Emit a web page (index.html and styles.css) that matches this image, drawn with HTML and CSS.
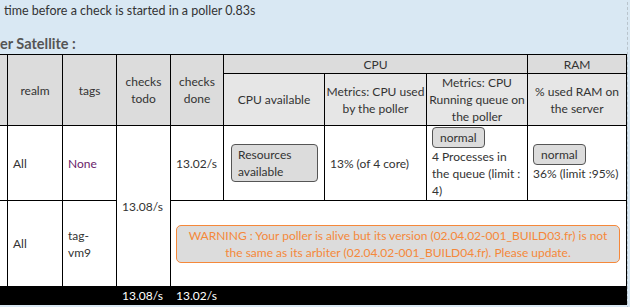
FILE: index.html
```html
<!DOCTYPE html>
<html>
<head>
<meta charset="utf-8">
<link rel="stylesheet" href="styles.css">
</head>
<body>
<div class="page">
  <p class="latency">time before a check is started in a poller 0.83s</p>
  <h3 class="title">er Satellite :</h3>
  <table class="sat">
    <colgroup>
      <col class="c0"><col class="c-realm"><col class="c-tags"><col class="c-todo"><col class="c-done">
      <col class="c-avail"><col class="c-used"><col class="c-queue"><col class="c-ram">
    </colgroup>
    <thead>
      <tr class="h1">
        <th rowspan="2"></th>
        <th rowspan="2">realm</th>
        <th rowspan="2">tags</th>
        <th rowspan="2">checks todo</th>
        <th rowspan="2">checks done</th>
        <th colspan="3">CPU</th>
        <th>RAM</th>
      </tr>
      <tr class="h2">
        <th class="sub">CPU available</th>
        <th class="sub">Metrics: CPU used by the poller</th>
        <th class="sub">Metrics: CPU Running queue on the poller</th>
        <th class="sub">% used RAM on the server</th>
      </tr>
    </thead>
    <tbody>
      <tr class="r1">
        <td></td>
        <td>All</td>
        <td class="none">None</td>
        <td rowspan="2">13.08/s</td>
        <td>13.02/s</td>
        <td><div class="badge block">Resources available</div></td>
        <td>13% (of 4 core)</td>
        <td class="top"><span class="badge">normal</span><br>4 Processes in the queue (limit : 4)</td>
        <td><span class="badge">normal</span><br>36% (limit :95%)</td>
      </tr>
      <tr class="r2">
        <td></td>
        <td>All</td>
        <td>tag-vm9</td>
        <td colspan="5"><div class="warn">WARNING : Your poller is alive but its version (02.04.02-001_BUILD03.fr) is not the same as its arbiter (02.04.02-001_BUILD04.fr). Please update.</div></td>
      </tr>
    </tbody>
    <tfoot>
      <tr class="foot">
        <td></td><td></td><td></td>
        <td>13.08/s</td>
        <td>13.02/s</td>
        <td></td><td></td><td></td><td></td>
      </tr>
    </tfoot>
  </table>
</div>
</body>
</html>
```
FILE: styles.css
```css
html, body {
  margin: 0;
  padding: 0;
  background: #d9e8f3;
  overflow: hidden;
}
body {
  font-family: Lato, "Liberation Sans", sans-serif;
  font-size: 12px;
  line-height: 17px;
  color: #333;
}
.page {
  width: 628px;
  height: 307px;
  border-right: 1px dashed #b9c4cc;
  box-sizing: border-box;
}
.latency {
  margin: 2px 0 0 4px;
  font-size: 12.5px;
}
.title {
  margin: 15px 0 0 0;
  font-size: 14.5px;
  line-height: 20px;
  font-weight: bold;
  color: #555;
}
.sat {
  margin-left: -1px;
  width: 627px;
  border-collapse: collapse;
  table-layout: fixed;
  background: #fff;
}
.c0 { width: 8px; }
.c-realm { width: 55px; }
.c-tags { width: 54px; }
.c-todo { width: 54px; }
.c-done { width: 53px; }
.c-avail { width: 101px; }
.c-used { width: 102px; }
.c-queue { width: 101px; }
.c-ram { width: 99px; }
.sat th, .sat td {
  border: 1px solid #000;
  padding: 0 5px;
}
.sat th {
  background: #dcdcdc;
  font-weight: normal;
  text-align: center;
  vertical-align: middle;
  padding: 0;
}
.sat th.sub {
  background: #e6e6e6;
}
.h1 { height: 19px; }
.h2 { height: 51px; }
.sat td {
  vertical-align: middle;
  text-align: left;
}
.r1 { height: 75px; }
.r2 { height: 86px; }
.sat td.top {
  vertical-align: top;
  padding-top: 1px;
}
.none { color: #6a1b6a; }
.badge {
  display: inline-block;
  background: #dcdcdc;
  border: 1px solid #555;
  border-radius: 4px;
  padding: 1px 7px;
  line-height: 17px;
}
.badge.block {
  display: block;
  margin: 0 1px 0 2px;
  padding: 1px 6px;
  line-height: 17px;
}
.warn {
  background: #dcdcdc;
  border: 1px solid #f5883a;
  border-radius: 5px;
  color: #f5883a;
  text-align: center;
  padding: 1px 4px;
  margin-right: 1px;
}
.foot td {
  background: #000;
  color: #fff;
  border-color: #000;
  height: 17px;
  text-align: left;
  padding: 0 5px;
}
```
